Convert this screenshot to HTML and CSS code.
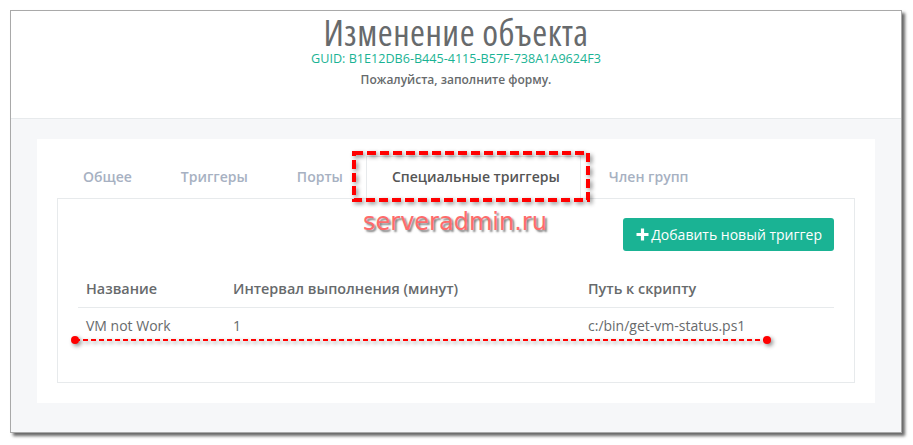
FILE: index.html
```html
<!DOCTYPE html>
<html lang="ru">
<head>
    <meta charset="UTF-8">
    <meta name="viewport" content="width=device-width, initial-scale=1.0">
    <title>Изменение объекта</title>

    <!-- CSS Styles -->
    <link rel="stylesheet" href="styles.css">
</head>
<body>

    <div class="frame">
        <!-- Page heading -->
        <div class="page-heading">
            <h2>Изменение объекта</h2>
            <div class="guid">GUID: B1E12DB6-B445-4115-B57F-738A1A9624F3</div>
            <div class="hint">Пожалуйста, заполните форму.</div>
        </div>

        <!-- Content -->
        <div class="wrapper">
            <div class="tabs-container">
                <ul class="nav-tabs">
                    <li><a>Общее</a></li>
                    <li><a>Триггеры</a></li>
                    <li><a>Порты</a></li>
                    <li class="active"><a>Специальные триггеры</a></li>
                    <li><a>Член групп</a></li>
                </ul>

                <div class="tab-pane">
                    <div class="toolbar">
                        <button class="btn-add">
                            <svg width="13" height="13" viewBox="0 0 13 13"><path d="M6.5 0.5v12M0.5 6.5h12" stroke="#fff" stroke-width="3.2"/></svg>
                            Добавить новый триггер
                        </button>
                    </div>

                    <table>
                        <thead>
                            <tr>
                                <th class="col-name">Название</th>
                                <th class="col-interval">Интервал выполнения (минут)</th>
                                <th>Путь к скрипту</th>
                            </tr>
                        </thead>
                        <tbody>
                            <tr>
                                <td>VM not Work</td>
                                <td>1</td>
                                <td>c:/bin/get-vm-status.ps1</td>
                            </tr>
                        </tbody>
                    </table>
                </div>
            </div>
        </div>

        <!-- Annotations drawn over the screenshot -->
        <svg class="mark-box" width="238" height="51" viewBox="0 0 238 51">
            <rect x="2" y="2" width="234" height="47" fill="none" stroke="#ff0000" stroke-width="4" stroke-dasharray="9 4"/>
        </svg>
        <div class="watermark">serveradmin.ru</div>
        <svg class="mark-line" width="710" height="16" viewBox="0 0 710 16">
            <line x1="8" y1="8" x2="700" y2="8" stroke="#ff0000" stroke-width="2" stroke-dasharray="5 3"/>
            <circle cx="8" cy="8" r="4" fill="#ff0000"/>
            <circle cx="700" cy="8" r="4" fill="#ff0000"/>
        </svg>
    </div>

</body>
</html>
```

FILE: styles.css
```css
/* Reset styles */
* {
    margin: 0;
    padding: 0;
    box-sizing: border-box;
}

body {
    font-family: 'Open Sans', sans-serif;
    font-size: 13px;
    color: #676a6c;
    background: #fff;
    padding: 10px;
}

/* Screenshot frame */
.frame {
    position: relative;
    width: 892px;
    height: 423px;
    border: 1px solid #a9a9a9;
    box-shadow: 3px 3px 3px rgba(0, 0, 0, 0.6);
    background: #fff;
    display: flex;
    flex-direction: column;
}

/* Heading */
.page-heading {
    height: 108px;
    border-bottom: 1px solid #e7eaec;
    text-align: center;
    padding-top: 4px;
}

.page-heading h2 {
    font-size: 36px;
    font-weight: 400;
    font-stretch: 75%;
    letter-spacing: 0.5px;
    line-height: 36px;
    color: #676a6c;
}

.guid {
    font-size: 12.6px;
    line-height: 16px;
    color: #1ab394;
}

.hint {
    margin-top: 5px;
    font-size: 12px;
    font-weight: 600;
    line-height: 16px;
    color: #676a6c;
}

/* Content */
.wrapper {
    flex: 1;
    background: #f6f7f9;
    padding: 20px 26px 29px 26px;
}

.tabs-container {
    background: #fff;
    height: 100%;
    padding: 17px 20px 20px 20px;
}

.nav-tabs {
    list-style: none;
    display: flex;
    border-bottom: 1px solid #e7eaec;
}

.nav-tabs li {
    margin-right: 2px;
    margin-bottom: -1px;
}

.nav-tabs a {
    display: block;
    padding: 10px 20px 11px 25px;
    line-height: 20px;
    font-size: 14px;
    font-weight: 600;
    color: #a7b1c2;
    border: 1px solid transparent;
}

.nav-tabs .active a {
    color: #555;
    background: #fff;
    border-color: #e7eaec #e7eaec transparent;
}

.tab-pane {
    border: 1px solid #e7eaec;
    border-top: 0;
    padding: 19px 20px 20px 20px;
}

.toolbar {
    display: flex;
    justify-content: flex-end;
}

.btn-add {
    display: flex;
    align-items: center;
    gap: 2px;
    height: 33px;
    padding: 0 12px 0 13px;
    background: #1ab394;
    color: #fff;
    border: 0;
    border-radius: 3px;
    font-family: 'Open Sans', sans-serif;
    font-size: 14px;
}

table {
    width: 100%;
    border-collapse: collapse;
    margin: 20px 0 18px;
}

th, td {
    text-align: left;
    padding: 8px;
    line-height: 20px;
    font-size: 14px;
}

th {
    font-size: 14.4px;
    font-weight: 600;
    color: #676a6c;
    border-bottom: 1px solid #e7eaec;
}

td {
    color: #676a6c;
}

.col-name {
    width: 147px;
}

.col-interval {
    width: 355px;
}

/* Annotations */
.mark-box {
    position: absolute;
    left: 341px;
    top: 140px;
    filter: drop-shadow(2px 2px 2px rgba(0, 0, 0, 0.45));
}

.watermark {
    position: absolute;
    left: 352px;
    top: 197px;
    font-family: 'DejaVu Sans', sans-serif;
    font-size: 24px;
    line-height: 28px;
    color: #ff6b6b;
    text-shadow: 2px 2px 2px rgba(0, 0, 0, 0.5);
}

.mark-line {
    position: absolute;
    left: 56px;
    top: 321px;
    filter: drop-shadow(2px 2px 2px rgba(0, 0, 0, 0.45));
}
```
